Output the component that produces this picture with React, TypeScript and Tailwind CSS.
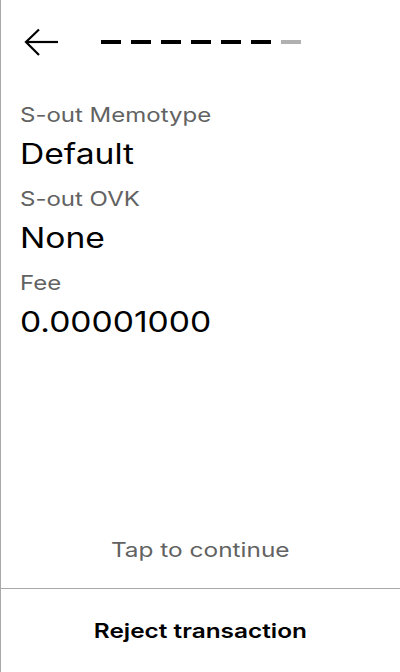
import React from "react";

const rows = [
  { label: "S-out Memotype", value: "Default" },
  { label: "S-out OVK", value: "None" },
  { label: "Fee", value: "0.00001000" },
];

export default function App() {
  return (
    <div
      className="w-[400px] h-[672px] overflow-hidden flex flex-col bg-white border-l border-[#a8a8a8] text-black"
      style={{ fontFamily: "Inter, 'Noto Sans', sans-serif" }}
    >
      <div className="flex items-center h-[84px] pl-[22px]">
        <svg width="36" height="30" viewBox="0 0 36 30" fill="none" stroke="black" strokeWidth="2.2">
          <path d="M3 15 H35" />
          <path d="M16 2.5 L3 15 L16 28" />
        </svg>
        <div className="flex gap-[10px] ml-[42px]">
          {[0, 1, 2, 3, 4, 5].map((i) => (
            <div key={i} className="w-[20px] h-[4px] bg-black" />
          ))}
          <div className="w-[20px] h-[4px] bg-[#b0b0b0]" />
        </div>
      </div>
      <div className="flex flex-col items-start px-[19px] pt-[16px]">
        {rows.map((r) => (
          <React.Fragment key={r.label}>
            <span className="inline-block text-[20px] leading-[30px] text-[#626262] origin-left scale-x-[1.2] whitespace-nowrap">
              {r.label}
            </span>
            <span className="inline-block text-[28px] leading-[54px] -mt-[3px] mb-[3px] origin-left scale-x-[1.2] whitespace-nowrap">
              {r.value}
            </span>
          </React.Fragment>
        ))}
      </div>
      <div className="flex-1" />
      <div className="flex justify-center mb-[24px]">
        <span className="inline-block text-[20px] leading-[28px] text-[#626262] scale-x-[1.22]">Tap to continue</span>
      </div>
      <div className="border-t border-[#a8a8a8] h-[84px] flex items-center justify-center">
        <span className="inline-block text-[20px] font-semibold scale-x-[1.22]">Reject transaction</span>
      </div>
    </div>
  );
}
